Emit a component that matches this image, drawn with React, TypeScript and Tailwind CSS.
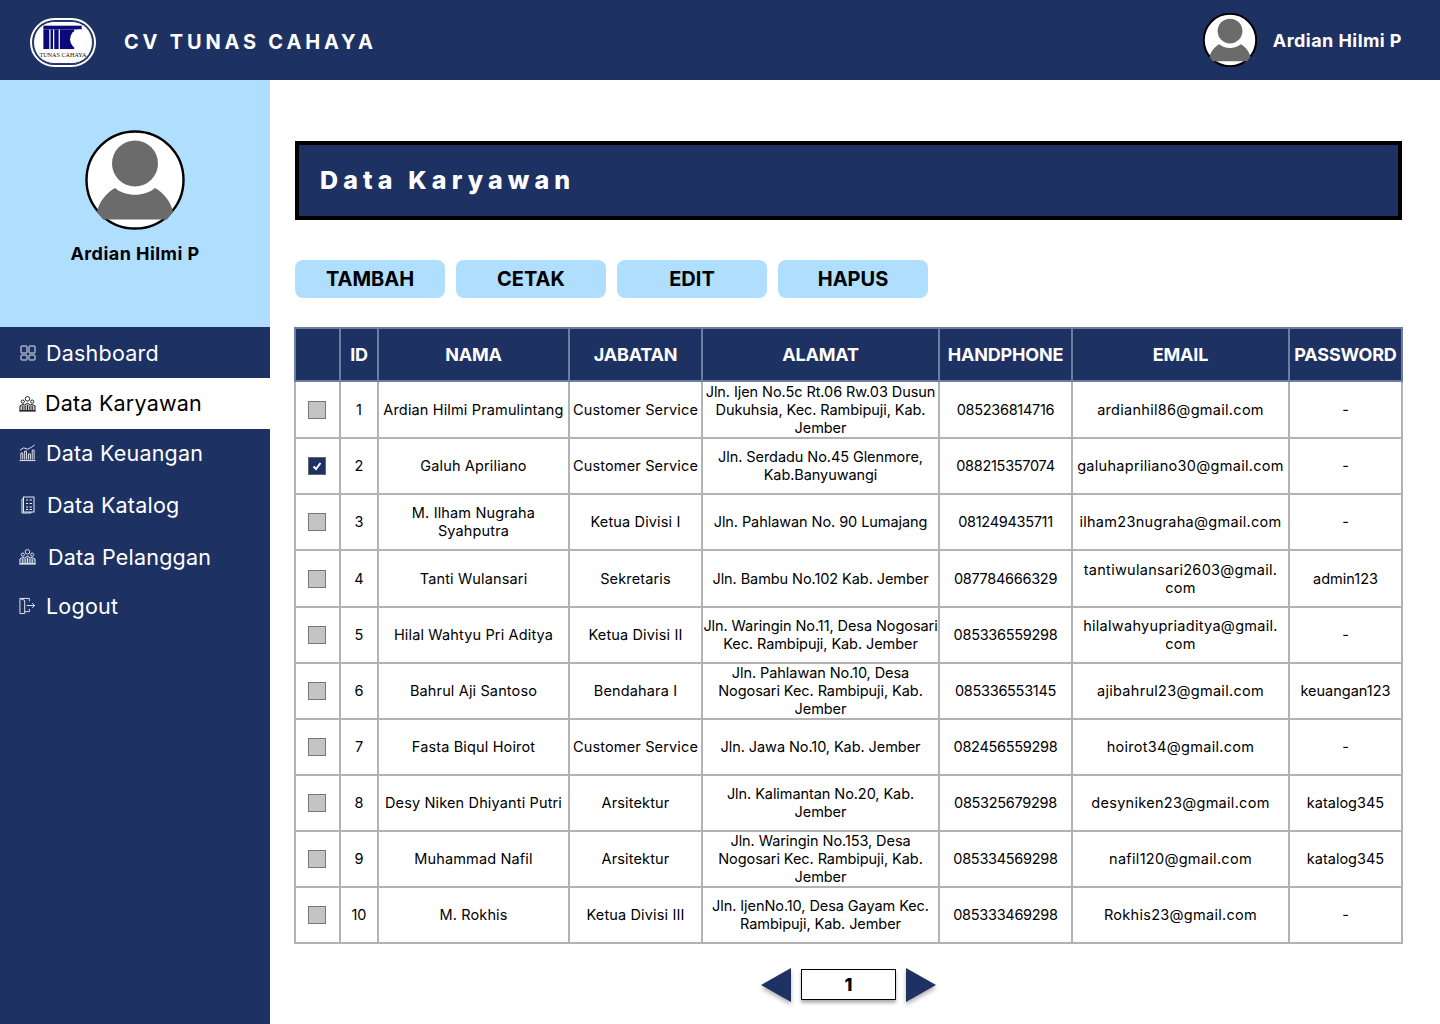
const rows = [
  { id: 1, nama: "Ardian Hilmi Pramulintang", jabatan: "Customer Service", alamat: "Jln. Ijen No.5c Rt.06 Rw.03 Dusun\nDukuhsia, Kec. Rambipuji, Kab.\nJember", hp: "085236814716", email: "ardianhil86@gmail.com", pass: "-", h: "h-[57px]" },
  { id: 2, nama: "Galuh Apriliano", jabatan: "Customer Service", alamat: "Jln. Serdadu No.45 Glenmore,\nKab.Banyuwangi", hp: "088215357074", email: "galuhapriliano30@gmail.com", pass: "-", h: "h-[56px]", checked: true },
  { id: 3, nama: "M. Ilham Nugraha\nSyahputra", jabatan: "Ketua Divisi I", alamat: "Jln. Pahlawan No. 90 Lumajang", hp: "081249435711", email: "ilham23nugraha@gmail.com", pass: "-", h: "h-[56px]" },
  { id: 4, nama: "Tanti Wulansari", jabatan: "Sekretaris", alamat: "Jln. Bambu No.102 Kab. Jember", hp: "087784666329", email: "tantiwulansari2603@gmail. com", pass: "admin123", h: "h-[57px]" },
  { id: 5, nama: "Hilal Wahtyu Pri Aditya", jabatan: "Ketua Divisi II", alamat: "Jln. Waringin No.11, Desa Nogosari\nKec. Rambipuji, Kab. Jember", hp: "085336559298", email: "hilalwahyupriaditya@gmail. com", pass: "-", h: "h-[56px]" },
  { id: 6, nama: "Bahrul Aji Santoso", jabatan: "Bendahara I", alamat: "Jln. Pahlawan No.10, Desa\nNogosari Kec. Rambipuji, Kab.\nJember", hp: "085336553145", email: "ajibahrul23@gmail.com", pass: "keuangan123", h: "h-[56px]" },
  { id: 7, nama: "Fasta Biqul Hoirot", jabatan: "Customer Service", alamat: "Jln. Jawa No.10, Kab. Jember", hp: "082456559298", email: "hoirot34@gmail.com", pass: "-", h: "h-[56px]" },
  { id: 8, nama: "Desy Niken Dhiyanti Putri", jabatan: "Arsitektur", alamat: "Jln. Kalimantan No.20, Kab.\nJember", hp: "085325679298", email: "desyniken23@gmail.com", pass: "katalog345", h: "h-[56px]" },
  { id: 9, nama: "Muhammad Nafil", jabatan: "Arsitektur", alamat: "Jln. Waringin No.153, Desa\nNogosari Kec. Rambipuji, Kab.\nJember", hp: "085334569298", email: "nafil120@gmail.com", pass: "katalog345", h: "h-[56px]" },
  { id: 10, nama: "M. Rokhis", jabatan: "Ketua Divisi III", alamat: "Jln. IjenNo.10, Desa Gayam Kec.\nRambipuji, Kab. Jember", hp: "085333469298", email: "Rokhis23@gmail.com", pass: "-", h: "h-[56px]" },
]

function Avatar({ className, stroke = 2.4 }: { className: string; stroke?: number }) {
  return (
    <svg viewBox="0 0 100 100" className={className}>
      <circle cx="50" cy="50" r="48.5" fill="#fff" stroke="#000" strokeWidth={stroke} />
      <circle cx="50" cy="33.5" r="23" fill="#6b6b6b" />
      <path d="M30 58 C40 67 60 67 70 58 C79 63 86 72 88 82 L82 89.5 L18 89.5 L12 82 C14 72 21 63 30 58 Z" fill="#6b6b6b" />
    </svg>
  )
}

function Logo() {
  return (
    <div className="mt-[4px] flex h-[49px] w-[66px] items-center justify-center rounded-[25px] border-2 border-white bg-[#1e3163] p-px">
      <svg viewBox="0 0 64 46" className="h-full w-full">
        <rect x="0.5" y="0.5" width="63" height="45" rx="22" fill="#fff" stroke="#1e3163" />
        <rect x="11" y="5" width="41" height="4" fill="#0a0a78" />
        <rect x="11" y="9" width="33" height="21" fill="#0a0a78" />
        <circle cx="50" cy="19.5" r="10.5" fill="#fff" />
        <path d="M18 9 V30 M22 9 V30 M28 9 V30" stroke="#fff" strokeWidth="1.3" />
        <text x="32" y="38.5" textAnchor="middle" fontSize="6.6" fill="#111" fontFamily="Liberation Serif, serif">TUNAS CAHAYA</text>
      </svg>
    </div>
  )
}

function IconDash() {
  return (
    <svg viewBox="0 0 16 16" className="h-4 w-4" fill="none" stroke="currentColor" strokeWidth="1">
      <rect x="1" y="1" width="6" height="7" rx="0.5" />
      <rect x="9" y="1" width="6" height="7" rx="0.5" />
      <rect x="1" y="10" width="6" height="5" rx="0.5" />
      <rect x="9" y="10" width="6" height="5" rx="0.5" />
    </svg>
  )
}

function IconPeople() {
  return (
    <svg viewBox="0 0 18 18" className="h-[18px] w-[18px]" fill="none" stroke="currentColor" strokeWidth="1">
      <circle cx="9" cy="3.5" r="2.4" />
      <circle cx="4" cy="6.5" r="1.7" />
      <circle cx="14" cy="6.5" r="1.7" />
      <path d="M1 16 V11 L4 9.5 L6 10 L9 8 L12 10 L14 9.5 L17 11 V16 Z" fill="currentColor" fillOpacity=".25" />
      <path d="M4 11 V16 M6.5 11 V16 M9 10 V16 M11.5 11 V16 M14 11 V16 M0 16.5 H18" />
    </svg>
  )
}

function IconChart() {
  return (
    <svg viewBox="0 0 18 18" className="h-[18px] w-[18px]" fill="none" stroke="currentColor" strokeWidth="1">
      <path d="M0.5 17 H17.5 M2 16 V9 H4 V16 M6 16 V7 H8 V16 M10 16 V10 H12 V16 M14 16 V6 H16 V16" />
      <path d="M1 6 L5 3.5 L9 5 L13 3 L16.5 0.5" />
    </svg>
  )
}

function IconList() {
  return (
    <svg viewBox="0 0 14 18" className="h-[18px] w-[14px]" fill="none" stroke="currentColor" strokeWidth="1">
      <rect x="2.5" y="1" width="10.5" height="15" />
      <path d="M2.5 3 H1 V17 H10 V16" />
      <path d="M5 4 H7 M8.5 4 H11 M5 7.5 H7 M8.5 7.5 H11 M5 11 H7 M8.5 11 H11 M5 13.5 H7 M8.5 13.5 H11" />
    </svg>
  )
}

function IconLogout() {
  return (
    <svg viewBox="0 0 18 18" className="h-[18px] w-[18px]" fill="none" stroke="currentColor" strokeWidth="1">
      <path d="M11 4 V1 H1 V17 H6 M1 1 L6 3 V17 M6 15 H11 V12" />
      <path d="M8 8.5 H16.5 M14 6 L16.5 8.5 L14 11" />
    </svg>
  )
}

const menu = [
  { label: "Dashboard", icon: <IconDash />, box: "h-[50px]", ml: "ml-[10px]" },
  { label: "Data Karyawan", icon: <IconPeople />, box: "h-[51px] bg-white text-black", ml: "ml-[9px]" },
  { label: "Data Keuangan", icon: <IconChart />, box: "h-[48px]", ml: "ml-[10px]" },
  { label: "Data Katalog", icon: <IconList />, box: "h-[56px]", ml: "ml-[11px]" },
  { label: "Data Pelanggan", icon: <IconPeople />, box: "h-[48px]", ml: "ml-[12px]" },
  { label: "Logout", icon: <IconLogout />, box: "h-[50px]", ml: "ml-[10px]" },
]

const head = ["", "ID", "NAMA", "JABATAN", "ALAMAT", "HANDPHONE", "EMAIL", "PASSWORD"]
const widths = ["w-[45px]", "w-[38px]", "w-[191px]", "w-[133px]", "w-[237px]", "w-[133px]", "w-[217px]", "w-[113px]"]

export default function App() {
  return (
    <div className="flex h-[1024px] w-[1440px] flex-col overflow-hidden bg-white font-['Inter',sans-serif] text-black">
      <header className="flex h-20 shrink-0 items-center bg-[#1e3163] pl-[30px] pr-[38px] text-white">
        <Logo />
        <h1 className="ml-[28px] mt-[4px] text-[20px] font-bold tracking-[0.19em]">CV TUNAS CAHAYA</h1>
        <div className="ml-auto flex items-center">
          <Avatar className="h-[54px] w-[54px]" stroke={3.6} />
          <span className="ml-[16px] text-[18px] font-bold tracking-[0.025em]">Ardian Hilmi P</span>
        </div>
      </header>

      <div className="flex flex-1">
        <aside className="flex w-[270px] shrink-0 flex-col bg-[#1e3163]">
          <div className="flex h-[247px] flex-col items-center bg-[#b0deff] pt-[50px]">
            <Avatar className="h-[100px] w-[100px]" />
            <p className="mt-[10px] text-[18px] font-bold tracking-[0.025em]">Ardian Hilmi P</p>
          </div>
          <nav className="mt-px flex flex-col text-[21.5px] tracking-[0.01em] text-white">
            {menu.map((m) => (
              <div key={m.label} className={`flex items-center pl-[19px] ${m.box}`}>
                <span className="flex w-[17px] justify-center opacity-90">{m.icon}</span>
                <span className={m.ml}>{m.label}</span>
              </div>
            ))}
          </nav>
        </aside>

        <main className="min-w-0 flex-1 pl-[25px] pr-[38px] pt-[61px]">
          <div className="flex h-[79px] items-center border-4 border-black bg-[#1e3163] pl-[21px]">
            <h2 className="text-[25px] font-extrabold tracking-[0.205em] text-white">Data Karyawan</h2>
          </div>

          <div className="mt-[40px] flex gap-[11px]">
            {["TAMBAH", "CETAK", "EDIT", "HAPUS"].map((b) => (
              <button key={b} className="h-[38px] w-[150px] rounded-lg bg-[#b0deff] text-[20px] font-bold text-black">
                {b}
              </button>
            ))}
          </div>

          <table className="-ml-px mt-[29px] w-[1107px] table-fixed border-collapse text-center text-[14.5px] leading-[18px]">
            <colgroup>
              {widths.map((w, i) => (
                <col key={i} className={w} />
              ))}
            </colgroup>
            <thead>
              <tr className="h-[53px] bg-[#1e3163] text-white">
                {head.map((h, i) => (
                  <th key={i} className="whitespace-nowrap border-2 border-[#6f7d9e] px-0 text-[18px] font-bold tracking-[-0.01em]">
                    {h}
                  </th>
                ))}
              </tr>
            </thead>
            <tbody>
              {rows.map((r) => (
                <tr key={r.id} className={r.h}>
                  <td className="border-2 border-[#b3b3b3]">
                    {r.checked ? (
                      <div className="ml-[12px] flex h-[18px] w-[18px] items-center justify-center border border-[#666] bg-[#1e3163]">
                        <svg viewBox="0 0 12 12" className="h-3 w-3" fill="none" stroke="#fff" strokeWidth="2">
                          <path d="M2.5 6.5 L5 9 L9.5 3" />
                        </svg>
                      </div>
                    ) : (
                      <div className="ml-[12px] h-[18px] w-[18px] border border-[#777] bg-[#c4c4c4]" />
                    )}
                  </td>
                  <td className="border-2 border-[#b3b3b3]">{r.id}</td>
                  <td className="whitespace-pre border-2 border-[#b3b3b3] tracking-[0.01em]">{r.nama}</td>
                  <td className="whitespace-nowrap border-2 border-[#b3b3b3] tracking-[0.01em]">{r.jabatan}</td>
                  <td className="whitespace-pre border-2 border-[#b3b3b3] tracking-[-0.005em]">{r.alamat}</td>
                  <td className="border-2 border-[#b3b3b3] tracking-[-0.02em]">{r.hp}</td>
                  <td className="border-2 border-[#b3b3b3] px-[3px] tracking-[0.02em]">{r.email}</td>
                  <td className="border-2 border-[#b3b3b3]">{r.pass}</td>
                </tr>
              ))}
            </tbody>
          </table>

          <div className="mt-[24px] flex items-center justify-center gap-[10px]">
            <svg viewBox="0 0 30 34" className="h-[34px] w-[30px] drop-shadow-[0_3px_2px_rgba(0,0,0,0.3)]">
              <path d="M30 0 V34 L0 17 Z" fill="#1e3163" />
            </svg>
            <div className="mb-px flex h-[31px] w-[95px] items-center justify-center border border-black bg-white text-[18px] font-extrabold shadow-[0_3px_3px_rgba(0,0,0,0.3)]">
              1
            </div>
            <svg viewBox="0 0 30 34" className="h-[34px] w-[30px] drop-shadow-[0_3px_2px_rgba(0,0,0,0.3)]">
              <path d="M0 0 V34 L30 17 Z" fill="#1e3163" />
            </svg>
          </div>
        </main>
      </div>
    </div>
  )
}
